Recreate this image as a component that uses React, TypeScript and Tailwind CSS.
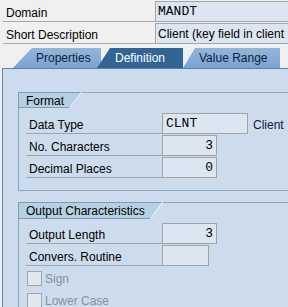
import React from "react";

function TopRow({ label, value, mono }: { label: string; value: string; mono?: boolean }) {
  return (
    <div className="flex h-[21px]">
      <div className="w-[152px] shrink-0 border-b border-[#a9a9a9] pl-[3px] pt-[4px] leading-[16px]">{label}</div>
      <div
        className={
          "w-[140px] shrink-0 border border-[#a5a5a5] bg-[#dce6f3] pl-[2px] whitespace-nowrap overflow-hidden " +
          (mono ? "font-['Liberation_Mono',monospace] text-[13px] pt-[2px] leading-[15px]" : "pt-[2px] leading-[16px]")
        }
      >
        {value}
      </div>
    </div>
  );
}

function FieldRow({
  label,
  value,
  width,
  right,
  extra,
}: {
  label: string;
  value: string;
  width: string;
  right?: boolean;
  extra?: string;
}) {
  return (
    <div className="flex h-[21px] items-stretch">
      <div className="w-[136px] shrink-0 border-b border-[#9aa6b3] pl-[3px] pt-[4px] leading-[16px]">{label}</div>
      <div
        className={
          width +
          " shrink-0 border border-[#a3a3a3] bg-[#dce6f3] px-[3px] pt-[2px] font-['Liberation_Mono',monospace] text-[13px] leading-[15px] " +
          (right ? "text-right" : "text-left")
        }
      >
        {value}
      </div>
      {extra && <div className="pl-[5px] pt-[4px] leading-[16px] text-[#141452]">{extra}</div>}
    </div>
  );
}

function GroupHeader({ title, h }: { title: string; h: string }) {
  return (
    <div className={"relative self-start -mt-px -ml-px " + h}>
      <div
        className={
          "h-full bg-[#b5d1e1] border-t border-l border-b border-[#7f9cb8] pl-[7px] pr-[18px] leading-[14px] pt-[1px] [clip-path:polygon(0_0,100%_0,calc(100%-12px)_100%,0_100%)]"
        }
      >
        {title}
      </div>
      <svg className="absolute right-0 top-0 h-full w-[13px]" viewBox="0 0 13 16" preserveAspectRatio="none">
        <line x1="0.5" y1="16" x2="12.5" y2="0" stroke="#eef4f8" strokeWidth="1" />
      </svg>
    </div>
  );
}

function Checkbox({ label }: { label: string }) {
  return (
    <div className="flex h-[22px] items-start pl-[8px] pt-[3px]">
      <div className="h-[15px] w-[15px] border border-[#a6a6a6] bg-[#dfe7ef]" />
      <div className="pl-[3px] leading-[16px] text-[#8092a8]">{label}</div>
    </div>
  );
}

export default function App() {
  return (
    <div className="w-[288px] h-[307px] overflow-hidden bg-[#f0f0f0] font-['Liberation_Sans',Arial,sans-serif] text-[12px] text-black flex flex-col">
      <div className="flex flex-col gap-[1px] pt-[1px] pl-[3px]">
        <TopRow label="Domain" value="MANDT" mono />
        <TopRow label="Short Description" value="Client (key field in client" />
      </div>

      <div className="mt-[4px] flex h-[20px] pl-[13px]">
        <div className="relative z-0 w-[88px] shrink-0 bg-gradient-to-b from-[#93b5dc] to-[#7ba3d0] text-[#0d1f3a] pl-[23px] leading-[20px] [clip-path:polygon(19px_0,100%_0,100%_100%,0_100%)]">
          Properties
        </div>
        <div className="relative z-10 -ml-[4px] w-[86px] shrink-0 bg-[#316596] text-white pl-[18px] leading-[20px] [clip-path:polygon(13px_0,100%_0,100%_100%,0_100%)]">
          Definition
        </div>
        <div className="relative z-0 w-[97px] shrink-0 bg-gradient-to-b from-[#93b5dc] to-[#7ba3d0] text-[#0d1f3a] pl-[16px] leading-[20px] [clip-path:polygon(12px_0,100%_0,100%_100%,0_100%)]">
          Value Range
        </div>
      </div>

      <div className="ml-[2px] flex-1 border-l border-t border-[#5a82af] bg-[#cddcec] pl-[15px] pt-[23px] flex flex-col">
        <div className="h-[99px] border-t border-l border-b border-[#8ba6c2] flex flex-col">
          <GroupHeader title="Format" h="h-[16px]" />
          <div className="mt-[5px] ml-[7px] flex flex-col gap-[1px]">
            <FieldRow label="Data Type" value="CLNT" width="w-[86px]" extra="Client" />
            <FieldRow label="No. Characters" value="3" width="w-[55px]" right />
            <FieldRow label="Decimal Places" value="0" width="w-[55px]" right />
          </div>
        </div>

        <div className="mt-[11px] flex-1 border-t border-l border-[#8ba6c2] flex flex-col">
          <GroupHeader title="Output Characteristics" h="h-[17px]" />
          <div className="mt-[4px] ml-[7px] flex flex-col gap-[1px]">
            <FieldRow label="Output Length" value="3" width="w-[55px]" right />
            <FieldRow label="Convers. Routine" value="" width="w-[47px]" />
          </div>
          <div className="mt-[2px] flex flex-col">
            <Checkbox label="Sign" />
            <Checkbox label="Lower Case" />
          </div>
        </div>
      </div>
    </div>
  );
}
